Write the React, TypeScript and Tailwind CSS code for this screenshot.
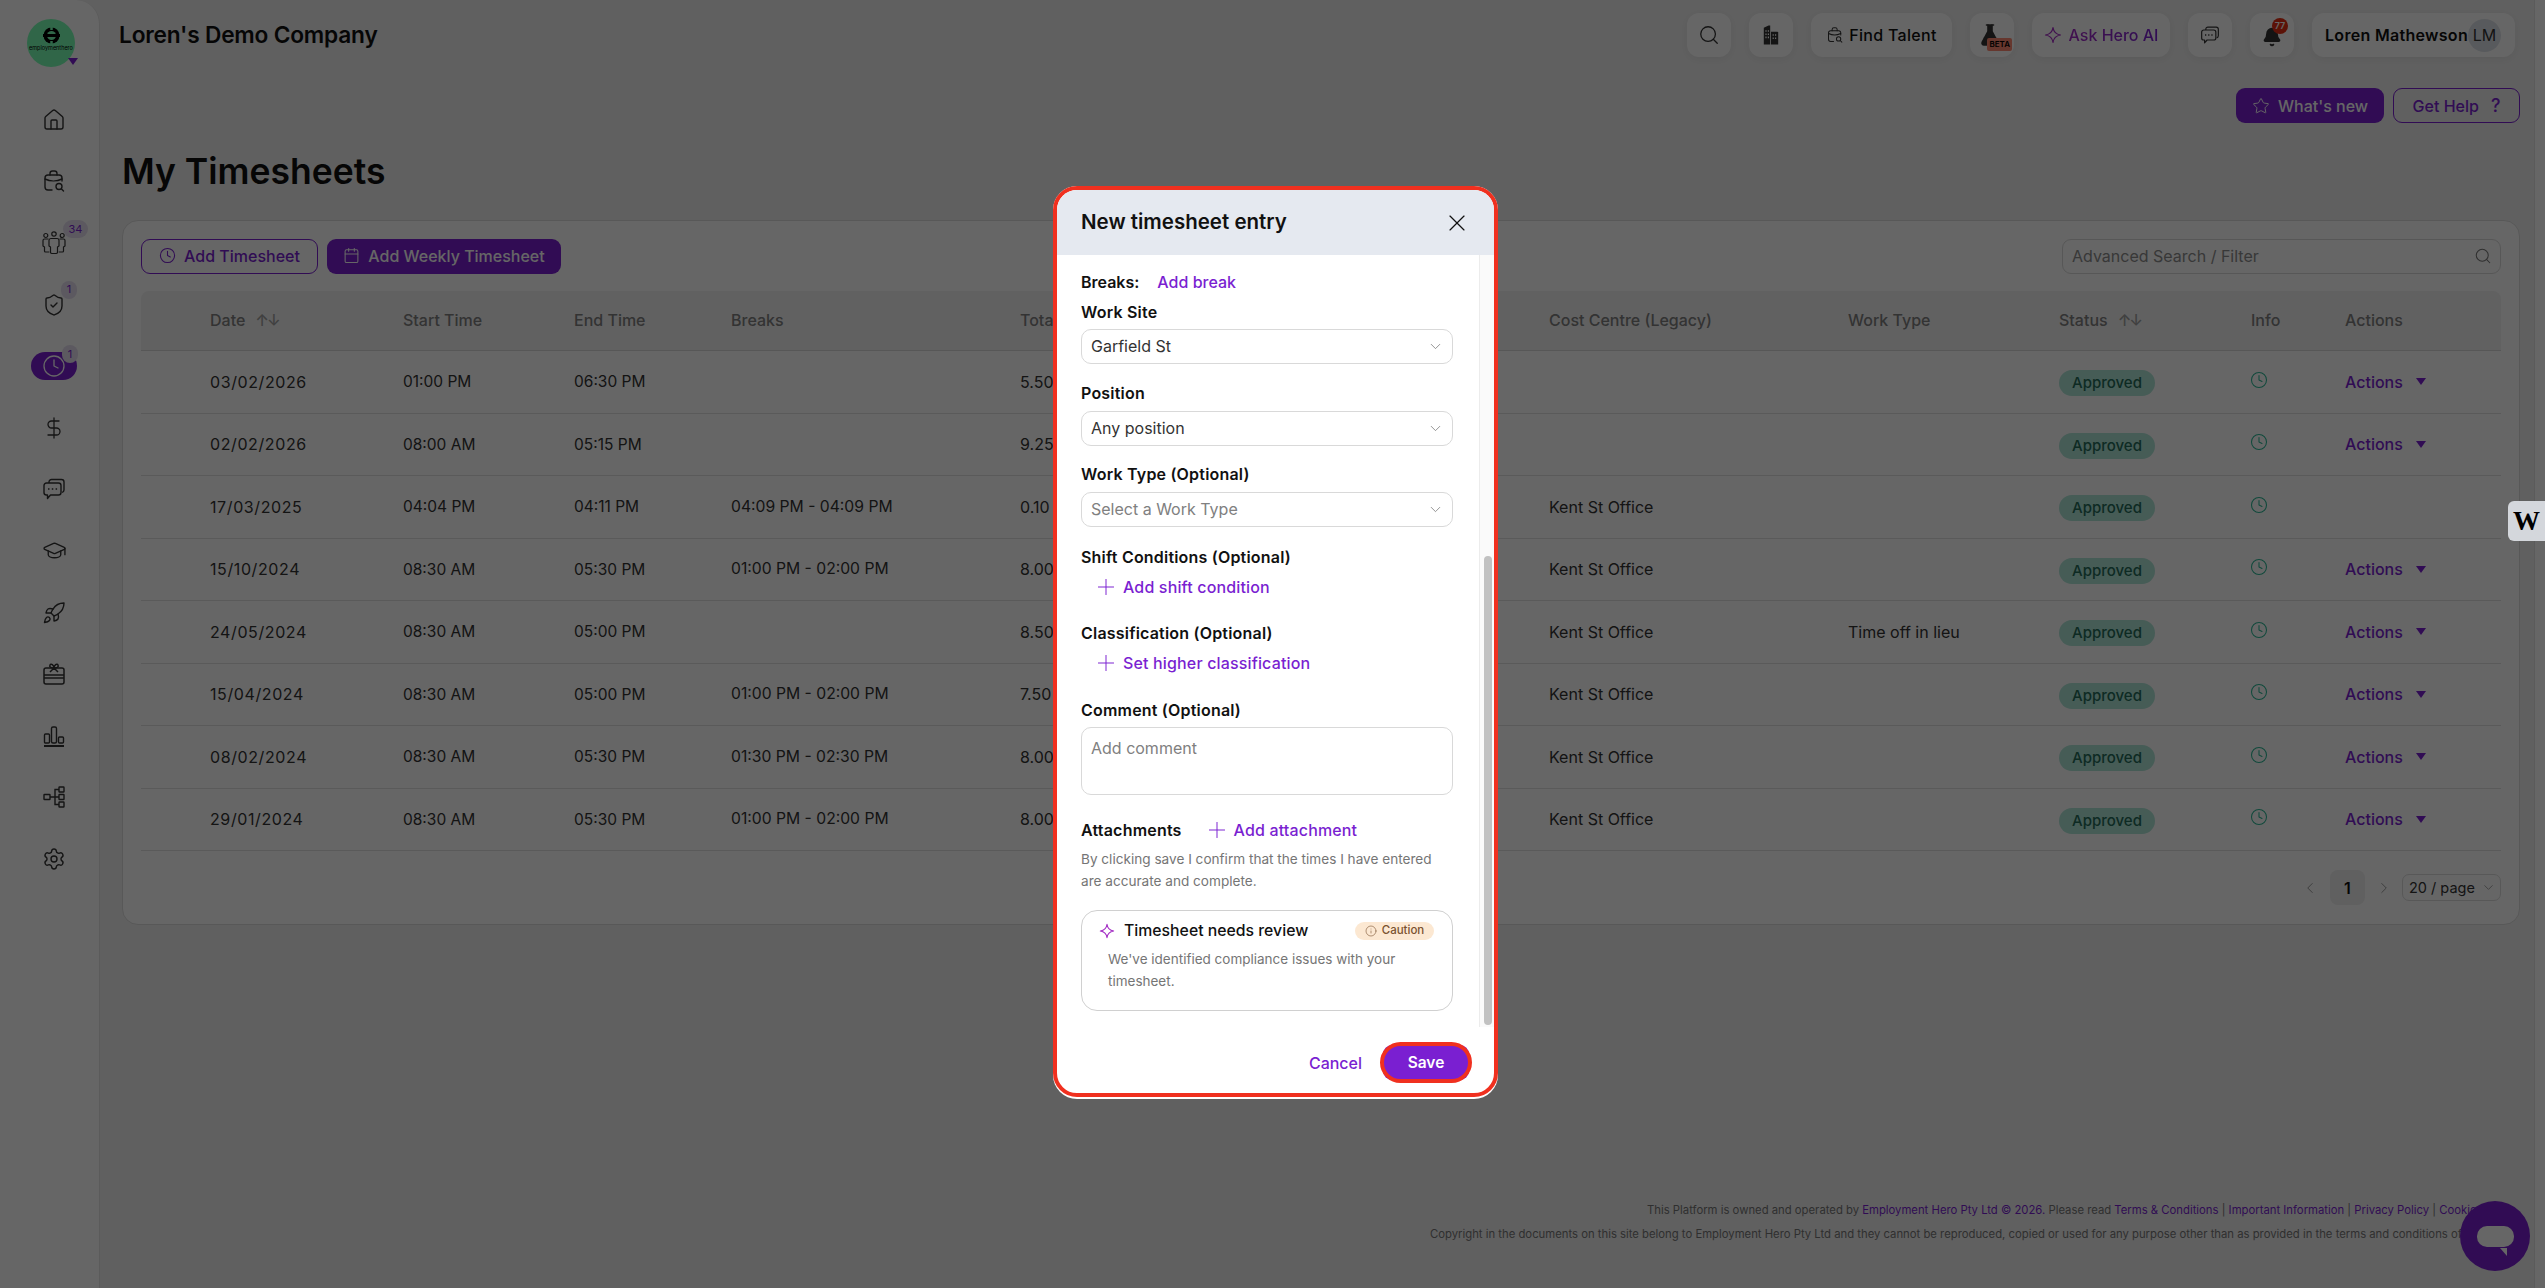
import { Calendar, ChevronDown, ChevronLeft, ChevronRight, Clock, DollarSign, FlaskConical, GraduationCap, House, Info, Plus, Rocket, Search, Settings, ShieldCheck, Star, X, Bell } from "lucide-react";

const rows = [
  { date: "03/02/2026", start: "01:00 PM", end: "06:30 PM", breaks: "", total: "5.50", cost: "", type: "", actions: true },
  { date: "02/02/2026", start: "08:00 AM", end: "05:15 PM", breaks: "", total: "9.25", cost: "", type: "", actions: true },
  { date: "17/03/2025", start: "04:04 PM", end: "04:11 PM", breaks: "04:09 PM - 04:09 PM", total: "0.10", cost: "Kent St Office", type: "", actions: false },
  { date: "15/10/2024", start: "08:30 AM", end: "05:30 PM", breaks: "01:00 PM - 02:00 PM", total: "8.00", cost: "Kent St Office", type: "", actions: true },
  { date: "24/05/2024", start: "08:30 AM", end: "05:00 PM", breaks: "", total: "8.50", cost: "Kent St Office", type: "Time off in lieu", actions: true },
  { date: "15/04/2024", start: "08:30 AM", end: "05:00 PM", breaks: "01:00 PM - 02:00 PM", total: "7.50", cost: "Kent St Office", type: "", actions: true },
  { date: "08/02/2024", start: "08:30 AM", end: "05:30 PM", breaks: "01:30 PM - 02:30 PM", total: "8.00", cost: "Kent St Office", type: "", actions: true },
  { date: "29/01/2024", start: "08:30 AM", end: "05:30 PM", breaks: "01:00 PM - 02:00 PM", total: "8.00", cost: "Kent St Office", type: "", actions: true },
];

const cols = "grid grid-cols-[193px_171px_157px_289px_529px_299px_211px_192px_94px_1fr] pl-[69px] items-center";

function Sparkle({ size = 18, color = "#a32cc4" }: { size?: number; color?: string }) {
  return (
    <svg width={size} height={size} viewBox="0 0 24 24" fill="none" stroke={color} strokeWidth="1.6" strokeLinejoin="round">
      <path d="M12 2 C12.8 8 15.5 11 22 12 C15.5 13 12.8 16 12 22 C11.2 16 8.5 13 2 12 C8.5 11 11.2 8 12 2 Z" />
    </svg>
  );
}

function BagSearch() {
  return (
    <svg width="24" height="24" viewBox="0 0 24 24" fill="none" stroke="#333" strokeWidth="1.4" strokeLinecap="round">
      <path d="M10 21H6a3 3 0 0 1-3-3V9a3 3 0 0 1 3-3h11a3 3 0 0 1 3 3v3" />
      <path d="M8 6V4.500A2.500 2.500 0 0 1 10.500 2h2A2.500 2.500 0 0 1 15 4.500V6" />
      <path d="M3 10c5 2.500 12 2.500 17 0" />
      <circle cx="17" cy="17.500" r="3" />
      <path d="m19.500 20 2 2" />
    </svg>
  );
}

function People() {
  return (
    <svg width="24" height="24" viewBox="0 0 24 24" fill="none" stroke="#333" strokeWidth="1.2" strokeLinejoin="round">
      <circle cx="3.800" cy="4.500" r="2" />
      <circle cx="12" cy="3" r="2.200" />
      <circle cx="20.200" cy="4.500" r="2" />
      <path d="M9 7.500h6a2 2 0 0 1 2 2V15l-1.500 1v5.500a1.500 1.500 0 0 1-1.500 1h-4a1.500 1.500 0 0 1-1.500-1V16L7 15V9.500a2 2 0 0 1 2-2Z" />
      <path d="M6.500 8H2.500A1.500 1.500 0 0 0 1 9.500V15l1.500 1v4a1 1 0 0 0 1 1h3.800" />
      <path d="M17.500 8h4A1.500 1.500 0 0 1 23 9.500V15l-1.500 1v4a1 1 0 0 1-1 1h-3.800" />
    </svg>
  );
}

function ChatDots({ size = 24 }: { size?: number }) {
  return (
    <svg width={size} height={size} viewBox="0 0 24 24" fill="none" stroke="#333" strokeWidth="1.4" strokeLinejoin="round">
      <path d="M7 6V5a2.500 2.500 0 0 1 2.500-2.500h10A2.500 2.500 0 0 1 22 5v8a2.500 2.500 0 0 1-2 2.400" />
      <path d="M4.500 6h12A2.500 2.500 0 0 1 19 8.500v7a2.500 2.500 0 0 1-2.500 2.500H8.500L5.500 21.500V18h-1A2.500 2.500 0 0 1 2 15.500v-7A2.500 2.500 0 0 1 4.500 6Z" />
      <path d="M6 12h1.500M9.800 12h1.500M13.600 12h1.500" strokeWidth="1.600" />
    </svg>
  );
}

function Buildings() {
  return (
    <svg width="20" height="26" viewBox="0 0 20 26" fill="#333">
      <path d="M1 4 7 1h2v24H1Z" />
      <path d="M10 9h8a1 1 0 0 1 1 1v15h-9Z" />
      <path d="M3 7h1.500v2H3Zm3 0h1.500v2H6Zm-3 4h1.500v2H3Zm3 0h1.500v2H6Zm-3 4h1.500v2H3Zm3 0h1.500v2H6Zm6-3h1.500v2H12Zm3 0h1.500v2H15Zm-3 4h1.500v2H12Zm3 0h1.500v2H15Z" fill="#fff" />
    </svg>
  );
}

function GiftCard() {
  return (
    <svg width="24" height="24" viewBox="0 0 24 24" fill="none" stroke="#333" strokeWidth="1.5">
      <rect x="2" y="6" width="20" height="16" rx="2" />
      <path d="M2 13h20M2 16h20" />
      <path d="M12 6 8 10M12 6l4 4M12 6C9 6 7 5 8 3s4 0 4 3Zm0 0c3 0 5-1 4-3s-4 0-4 3Z" />
    </svg>
  );
}

function Bars() {
  return (
    <svg width="24" height="24" viewBox="0 0 24 24" fill="none" stroke="#333" strokeWidth="1.4">
      <rect x="2.500" y="10" width="5" height="9" rx="1" />
      <rect x="9.500" y="3" width="5" height="16" rx="1.500" />
      <rect x="16.500" y="13" width="5" height="6" rx="1" />
      <path d="M2 22h20" strokeWidth="2" />
    </svg>
  );
}

function OrgTree() {
  return (
    <svg width="24" height="24" viewBox="0 0 24 24" fill="none" stroke="#333" strokeWidth="1.4">
      <rect x="2" y="9.500" width="6" height="5" rx="0.500" />
      <rect x="17" y="2" width="5" height="5" rx="0.500" />
      <rect x="17" y="9.500" width="5" height="5" rx="0.500" />
      <rect x="17" y="17" width="5" height="5" rx="0.500" />
      <path d="M8 12h9M13 12V4.500h4M13 12v7.500h4" />
    </svg>
  );
}

function HeroMark() {
  return (
    <svg width="17" height="17" viewBox="0 0 17 17" className="mt-[8px]">
      <circle cx="8.500" cy="8.500" r="8" fill="#000" />
      <circle cx="8.500" cy="8.500" r="4.500" fill="#78ffb4" />
      <path d="M0 8.500h17" stroke="#000" strokeWidth="3" />
      <path d="M8.500 0v3M8.500 14v3" stroke="#78ffb4" strokeWidth="2.500" />
    </svg>
  );
}

function Sidebar() {
  const cls = "relative flex h-[61.6px] items-center justify-center text-[#333]";
  const badge = "absolute flex h-[18px] items-center justify-center rounded-full bg-[#e6dff0] text-[11px] text-[#7a1fd1]";
  return (
    <aside className="flex h-full w-[100px] shrink-0 flex-col rounded-tr-[24px] border-r border-[#e4e4e4] bg-white">
      <div className="relative ml-[27px] mt-[19px] flex h-[48px] w-[48px] flex-col items-center rounded-full bg-[#78ffb4]">
        <HeroMark />
        <span className="mt-[1px] text-[5.500px] leading-[7px] text-black">employmenthero</span>
        <span className="absolute right-[-3px] top-[39px] h-0 w-0 border-x-[5px] border-t-[7px] border-x-transparent border-t-[#7a1fd1]" />
      </div>
      <div className="mt-[22px] ml-[23px] w-[62px]">
        <div className={cls}><House size={24} strokeWidth={1.4} /></div>
        <div className={cls}><BagSearch /></div>
        <div className={cls}><span className="relative flex"><People /><span className={`${badge} left-[21px] top-[-11px] w-[25px]`}>34</span></span></div>
        <div className={cls}><span className="relative flex"><ShieldCheck size={24} strokeWidth={1.4} /><span className={`${badge} left-[19px] top-[-12px] w-[16px]`}>1</span></span></div>
        <div className={cls}>
          <span className="relative flex h-[28px] w-[46px] items-center justify-center rounded-[14px] bg-[#7a1fd1] text-white">
            <Clock size={24} strokeWidth={1.3} />
            <span className={`${badge} left-[31px] top-[-7px] w-[16px]`}>1</span>
          </span>
        </div>
        <div className={cls}><DollarSign size={24} strokeWidth={1.3} /></div>
        <div className={cls}><ChatDots /></div>
        <div className={cls}><GraduationCap size={25} strokeWidth={1.3} /></div>
        <div className={cls}><Rocket size={24} strokeWidth={1.4} /></div>
        <div className={cls}><GiftCard /></div>
        <div className={cls}><Bars /></div>
        <div className={cls}><OrgTree /></div>
        <div className={cls}><Settings size={24} strokeWidth={1.4} /></div>
      </div>
    </aside>
  );
}

function TopBtn({ className, children }: { className: string; children: React.ReactNode }) {
  return (
    <div className={`relative flex h-[44px] items-center justify-center rounded-[12px] bg-white shadow-[0_2px_10px_rgba(0,0,0,0.06)] ${className}`}>
      {children}
    </div>
  );
}

function Header() {
  return (
    <header className="flex h-[44px] items-center justify-between pl-[19px] pr-[19px]">
      <h2 className="text-[22.700px] font-semibold leading-[48px] tracking-[-0.2px] text-[#111]">Loren's Demo Company</h2>
      <div className="flex items-center gap-[18px]">
        <TopBtn className="w-[44px]"><Search size={22} strokeWidth={1.4} className="text-[#333]" /></TopBtn>
        <TopBtn className="w-[44px]"><span className="flex scale-[0.8]"><Buildings /></span></TopBtn>
        <TopBtn className="w-[141px] gap-[5px]">
          <span className="-mx-[3px] flex scale-[0.72]"><BagSearch /></span>
          <span className="text-[16px] font-medium tracking-[0.3px] text-[#111]">Find Talent</span>
        </TopBtn>
        <TopBtn className="w-[44px]">
          <FlaskConical size={24} strokeWidth={1.6} className="-ml-[4px] text-[#333]" fill="#333" />
          <span className="absolute bottom-[6px] right-[2px] rounded-[2px] bg-[#ff8a73] px-[2px] text-[8px] font-semibold leading-[13px] text-black">BETA</span>
        </TopBtn>
        <TopBtn className="w-[138px] gap-[7px]">
          <Sparkle size={18} />
          <span className="bg-gradient-to-r from-[#a32cc4] to-[#7a1fd1] bg-clip-text text-[16px] font-medium text-transparent">Ask Hero AI</span>
        </TopBtn>
        <TopBtn className="w-[44px]"><ChatDots size={20} /></TopBtn>
        <TopBtn className="w-[44px]">
          <Bell size={20} className="mt-[4px] text-[#333]" fill="#333" />
          <span className="absolute right-[6px] top-[5px] flex h-[16px] w-[16px] items-center justify-center rounded-full bg-[#e62e12] text-[9px] font-semibold text-white">77</span>
        </TopBtn>
        <TopBtn className="w-[203px] justify-between pl-[10px] pr-[11px]">
          <span className="text-[16px] font-semibold tracking-[0.3px] text-[#111]">Loren Mathewson</span>
          <span className="flex h-[33px] w-[33px] items-center justify-center rounded-full bg-[#dde1e8] text-[16px] text-[#333]">LM</span>
        </TopBtn>
      </div>
    </header>
  );
}

function SortIcon() {
  return <span className="ml-[10px] text-[16px] tracking-[-2px] text-[#a0a0a0]">↑↓</span>;
}

function TimesheetCard() {
  return (
    <section className="ml-[22px] mr-[14px] mt-[26px] h-[705px] rounded-[16px] border border-[#dcdcdc] bg-white px-[18px] pt-[18px]">
      <div className="flex h-[35px] items-center">
        <button className="flex h-[35px] w-[177px] items-center justify-center gap-[8px] rounded-[9px] border border-[#7a1fd1] pb-[2px] text-[16px] font-medium text-[#7a1fd1]">
          <Clock size={17} strokeWidth={1.5} /> Add Timesheet
        </button>
        <button className="ml-[9px] flex h-[35px] w-[234px] items-center justify-center gap-[8px] rounded-[9px] bg-[#7a1fd1] pb-[2px] text-[16px] font-medium text-white">
          <Calendar size={17} strokeWidth={1.5} /> Add Weekly Timesheet
        </button>
        <div className="ml-auto flex h-[35px] w-[439px] items-center justify-between rounded-[9px] border border-[#d9d9d9] pb-[1px] pl-[9px] pr-[8px] text-[16px] text-[#8c8c8c]">
          Advanced Search / Filter
          <Search size={18} strokeWidth={1.4} className="text-[#777]" />
        </div>
      </div>
      <div className={`${cols} mt-[17px] h-[60px] rounded-t-[8px] border-b border-[#d9d9d9] bg-[#f3f3f3] pb-[2px] text-[16px] font-medium text-[#808080]`}>
        <span>Date<SortIcon /></span>
        <span>Start Time</span>
        <span>End Time</span>
        <span>Breaks</span>
        <span>Total</span>
        <span>Cost Centre (Legacy)</span>
        <span>Work Type</span>
        <span>Status<SortIcon /></span>
        <span>Info</span>
        <span>Actions</span>
      </div>
      {rows.map((r) => (
        <div key={r.date} className={`${cols} h-[62.5px] border-b border-[#e2e2e2] text-[16px] text-[#333]`}>
          <span className="tracking-[0.6px]">{r.date}</span>
          <span className="text-[15.500px]">{r.start}</span>
          <span className="text-[15.500px]">{r.end}</span>
          <span className="text-[15.700px]">{r.breaks}</span>
          <span>{r.total}</span>
          <span>{r.cost}</span>
          <span>{r.type}</span>
          <span className="mt-[3px] flex h-[26px] w-[96px] items-center justify-center rounded-full bg-[#afe5d8] text-[15px] font-medium text-[#246b58]">Approved</span>
          <span className="-ml-[1px] -mt-[4px] text-[#2ab795]"><Clock size={18} strokeWidth={1.4} /></span>
          {r.actions ? (
            <span className="flex items-center font-medium text-[#7a1fd1]">
              Actions
              <span className="ml-[13px] h-0 w-0 border-x-[5px] border-t-[7px] border-x-transparent border-t-[#7a1fd1]" />
            </span>
          ) : <span />}
        </div>
      ))}
      <div className="mt-[19px] flex h-[35px] items-center justify-end">
        <ChevronLeft size={18} strokeWidth={1.3} className="mr-[11px] text-[#999]" />
        <span className="flex h-[35px] w-[35px] items-center justify-center rounded-[8px] bg-[#f0f0f0] text-[16px] font-semibold text-[#111]">1</span>
        <ChevronRight size={18} strokeWidth={1.3} className="ml-[10px] text-[#999]" />
        <div className="ml-[9px] flex h-[27px] w-[99px] items-center justify-between rounded-[7px] border border-[#dcdcdc] pl-[6px] pr-[4px] text-[14.500px] text-[#333]">
          20 / page
          <ChevronDown size={15} strokeWidth={1.2} className="text-[#888]" />
        </div>
      </div>
    </section>
  );
}

function Footer() {
  return (
    <footer className="mt-[273px] overflow-hidden whitespace-nowrap text-[11.300px] leading-[24px] text-[#777]">
      <div className="pl-[1547px]">
        This Platform is owned and operated by <span className="text-[#7a1fd1]">Employment Hero Pty Ltd © 2026.</span> Please read <span className="text-[#7a1fd1]">Terms &amp; Conditions</span> | <span className="text-[#7a1fd1]">Important Information</span> | <span className="text-[#7a1fd1]">Privacy Policy</span> | <span className="text-[#7a1fd1]">Cookie Policy</span>
      </div>
      <div className="pl-[1330px]">
        Copyright in the documents on this site belong to Employment Hero Pty Ltd and they cannot be reproduced, copied or used for any purpose other than as provided in the terms and conditions of use
      </div>
    </footer>
  );
}

function Label({ children, className = "" }: { children: React.ReactNode; className?: string }) {
  return <div className={`text-[16px] font-semibold leading-[20px] tracking-[0.2px] text-[#111] ${className}`}>{children}</div>;
}

function SelectBox({ value, placeholder }: { value: string; placeholder?: boolean }) {
  return (
    <div className={`flex h-[35px] items-center justify-between rounded-[10px] border border-[#d9d9d9] pb-[1px] pl-[9px] pr-[8px] text-[16px] ${placeholder ? "text-[#808080]" : "text-[#333]"}`}>
      {value}
      <ChevronDown size={17} strokeWidth={1.1} className="text-[#777]" />
    </div>
  );
}

function AddLink({ children, className = "" }: { children: React.ReactNode; className?: string }) {
  return (
    <div className={`flex h-[20px] items-center gap-[4px] text-[16px] font-medium tracking-[0.15px] text-[#7a1fd1] ${className}`}>
      <Plus size={26} strokeWidth={0.9} />
      {children}
    </div>
  );
}

function TimesheetModal() {
  return (
    <div className="absolute inset-0 flex bg-black/60 pl-[1053px] pt-[186px]">
      <div className="h-[913px] w-[445px] rounded-[24px] bg-white">
        <div className="flex h-[911px] flex-col overflow-hidden rounded-[24px] border-4 border-[#f0301f]">
          <div className="flex h-[65px] shrink-0 items-center justify-between bg-[#e5e9f0] pl-[24px] pr-[23px]">
            <h3 className="text-[20.500px] font-semibold text-[#111]">New timesheet entry</h3>
            <X size={28} strokeWidth={1} className="text-[#111]" />
          </div>
          <div className="flex h-[772px] shrink-0">
            <div className="w-[422px] pl-[24px] pr-[26px] pt-[17px]">
              <div className="flex h-[20px] items-center gap-[18px] text-[16px] font-semibold text-[#111]">
                Breaks:
                <span className="font-medium text-[#7a1fd1]">Add break</span>
              </div>
              <Label className="mt-[10px]">Work Site</Label>
              <div className="mt-[7px]"><SelectBox value="Garfield St" /></div>
              <Label className="mt-[19px]">Position</Label>
              <div className="mt-[8px]"><SelectBox value="Any position" /></div>
              <Label className="mt-[18px]">Work Type (Optional)</Label>
              <div className="mt-[8px]"><SelectBox value="Select a Work Type" placeholder /></div>
              <Label className="mt-[20px]">Shift Conditions (Optional)</Label>
              <AddLink className="ml-[12px] mt-[10px]">Add shift condition</AddLink>
              <Label className="mt-[26px]">Classification (Optional)</Label>
              <AddLink className="ml-[12px] mt-[10px]">Set higher classification</AddLink>
              <Label className="mt-[27px]">Comment (Optional)</Label>
              <div className="mt-[7px] h-[68px] rounded-[10px] border border-[#d9d9d9] pl-[9px] pt-[10px] text-[16px] leading-[20px] text-[#808080]">Add comment</div>
              <div className="mt-[25px] flex h-[20px] items-center">
                <Label>Attachments</Label>
                <AddLink className="ml-[22px]">Add attachment</AddLink>
              </div>
              <p className="mt-[8px] text-[13.600px] leading-[22px] text-[#757575]">
                By clicking save I confirm that the times I have entered are accurate and complete.
              </p>
              <div className="mt-[18px] h-[101px] rounded-[16px] border border-[#d0d0d0] pl-[17px] pr-[18px] pt-[10px]">
                <div className="flex h-[20px] items-center justify-between">
                  <span className="flex items-center gap-[9px] text-[15.800px] font-medium text-[#111]">
                    <Sparkle size={16} />
                    Timesheet needs review
                  </span>
                  <span className="flex h-[18px] w-[79px] items-center justify-center gap-[5px] rounded-full bg-[#fce8d2] text-[11.500px] font-medium text-[#7a5230]">
                    <Info size={12} strokeWidth={1.2} /> Caution
                  </span>
                </div>
                <p className="mt-[7px] pl-[9px] text-[13.500px] leading-[22px] text-[#757575]">
                  We've identified compliance issues with your timesheet.
                </p>
              </div>
            </div>
            <div className="flex w-[15px] justify-center border-l border-[#ececec] bg-[#fafafa] pl-[1px]">
              <div className="mt-[301px] h-[469px] w-[8px] rounded-full bg-[#c1c1c1]" />
            </div>
          </div>
          <div className="flex flex-1 items-center justify-end gap-[21px] pr-[25px] pt-[5px]">
            <span className="text-[16px] font-medium text-[#7a1fd1]">Cancel</span>
            <button className="relative flex h-[35px] w-[86px] items-center justify-center rounded-[9px] bg-[#7a1fd1] text-[15.500px] font-semibold text-white">
              Save
              <span className="absolute -inset-[3px] rounded-full border-4 border-[#f0301f]" />
            </button>
          </div>
        </div>
      </div>
    </div>
  );
}

export default function App() {
  return (
    <div className="relative flex h-[1288px] w-[2545px] overflow-hidden bg-[#f0f0f0] font-['Inter',sans-serif]">
      <Sidebar />
      <main className="w-[2434px] shrink-0 pt-[13px]">
        <Header />
        <div className="mt-[31px] flex justify-end gap-[9px] pr-[14px]">
          <button className="flex h-[35px] w-[148px] items-center justify-center gap-[8px] rounded-[9px] bg-[#7a1fd1] text-[16px] font-medium text-white">
            <Star size={18} strokeWidth={1.3} /> What's new
          </button>
          <button className="flex h-[35px] w-[127px] items-center justify-center gap-[12px] rounded-[9px] border border-[#7a1fd1] text-[16px] font-medium text-[#7a1fd1]">
            Get Help <span className="text-[18px]">?</span>
          </button>
        </div>
        <h1 className="ml-[22px] mt-[27px] text-[35.500px] font-semibold leading-[44px] text-[#111]">My Timesheets</h1>
        <TimesheetCard />
        <Footer />
      </main>
      <div className="flex-1 border-l border-[#e4e4e4] bg-white" />
      <div className="absolute left-[2460px] top-[1201px] flex h-[70px] w-[70px] items-center justify-center rounded-full bg-[#7a1fd1]">
        <span className="relative h-[21px] w-[37px] rounded-[10px] bg-white">
          <span className="absolute bottom-[-9px] right-[7px] h-0 w-0 border-l-[7px] border-t-[8px] border-l-transparent border-t-white" />
        </span>
      </div>
      <TimesheetModal />
      <div className="absolute left-[2508px] top-[501px] flex h-[40px] w-[37px] items-center justify-center rounded-l-[6px] bg-[#d4d7dc] font-['Liberation_Serif',serif] text-[27px] font-bold text-black">
        W
      </div>
    </div>
  );
}
